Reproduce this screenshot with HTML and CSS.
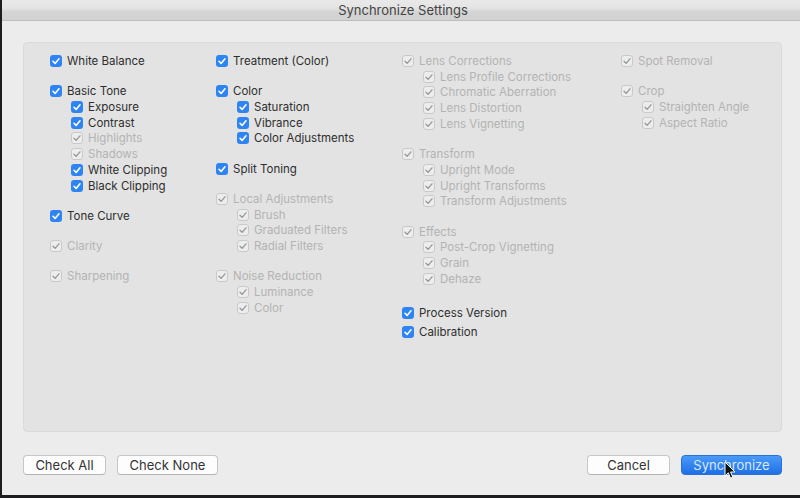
FILE: index.html
```html
<!DOCTYPE html>
<html>
<head>
<meta charset="utf-8">
<link rel="stylesheet" href="styles.css">
</head>
<body>
<div class="window">
  <div class="titlebar">Synchronize Settings</div>
  <div class="content">
    <div class="panel">
      <div class="col">
        <div class="group">
          <div class="item on"><span class="cb"><svg viewBox="0 0 12 12"><path d="M3 6.3 L5.1 8.4 L9 3.8"/></svg></span>White Balance</div>
        </div>
        <div class="group">
          <div class="item on"><span class="cb"><svg viewBox="0 0 12 12"><path d="M3 6.3 L5.1 8.4 L9 3.8"/></svg></span>Basic Tone</div>
          <div class="item sub on"><span class="cb"><svg viewBox="0 0 12 12"><path d="M3 6.3 L5.1 8.4 L9 3.8"/></svg></span>Exposure</div>
          <div class="item sub on"><span class="cb"><svg viewBox="0 0 12 12"><path d="M3 6.3 L5.1 8.4 L9 3.8"/></svg></span>Contrast</div>
          <div class="item sub off"><span class="cb"><svg viewBox="0 0 12 12"><path d="M3 6.3 L5.1 8.4 L9 3.8"/></svg></span>Highlights</div>
          <div class="item sub off"><span class="cb"><svg viewBox="0 0 12 12"><path d="M3 6.3 L5.1 8.4 L9 3.8"/></svg></span>Shadows</div>
          <div class="item sub on"><span class="cb"><svg viewBox="0 0 12 12"><path d="M3 6.3 L5.1 8.4 L9 3.8"/></svg></span>White Clipping</div>
          <div class="item sub on"><span class="cb"><svg viewBox="0 0 12 12"><path d="M3 6.3 L5.1 8.4 L9 3.8"/></svg></span>Black Clipping</div>
        </div>
        <div class="group">
          <div class="item on"><span class="cb"><svg viewBox="0 0 12 12"><path d="M3 6.3 L5.1 8.4 L9 3.8"/></svg></span>Tone Curve</div>
        </div>
        <div class="group">
          <div class="item off"><span class="cb"><svg viewBox="0 0 12 12"><path d="M3 6.3 L5.1 8.4 L9 3.8"/></svg></span>Clarity</div>
        </div>
        <div class="group">
          <div class="item off"><span class="cb"><svg viewBox="0 0 12 12"><path d="M3 6.3 L5.1 8.4 L9 3.8"/></svg></span>Sharpening</div>
        </div>
      </div>

      <div class="col">
        <div class="group">
          <div class="item on"><span class="cb"><svg viewBox="0 0 12 12"><path d="M3 6.3 L5.1 8.4 L9 3.8"/></svg></span>Treatment (Color)</div>
        </div>
        <div class="group">
          <div class="item on"><span class="cb"><svg viewBox="0 0 12 12"><path d="M3 6.3 L5.1 8.4 L9 3.8"/></svg></span>Color</div>
          <div class="item sub on"><span class="cb"><svg viewBox="0 0 12 12"><path d="M3 6.3 L5.1 8.4 L9 3.8"/></svg></span>Saturation</div>
          <div class="item sub on"><span class="cb"><svg viewBox="0 0 12 12"><path d="M3 6.3 L5.1 8.4 L9 3.8"/></svg></span>Vibrance</div>
          <div class="item sub on"><span class="cb"><svg viewBox="0 0 12 12"><path d="M3 6.3 L5.1 8.4 L9 3.8"/></svg></span>Color Adjustments</div>
        </div>
        <div class="group">
          <div class="item on"><span class="cb"><svg viewBox="0 0 12 12"><path d="M3 6.3 L5.1 8.4 L9 3.8"/></svg></span>Split Toning</div>
        </div>
        <div class="group">
          <div class="item off"><span class="cb"><svg viewBox="0 0 12 12"><path d="M3 6.3 L5.1 8.4 L9 3.8"/></svg></span>Local Adjustments</div>
          <div class="item sub off"><span class="cb"><svg viewBox="0 0 12 12"><path d="M3 6.3 L5.1 8.4 L9 3.8"/></svg></span>Brush</div>
          <div class="item sub off"><span class="cb"><svg viewBox="0 0 12 12"><path d="M3 6.3 L5.1 8.4 L9 3.8"/></svg></span>Graduated Filters</div>
          <div class="item sub off"><span class="cb"><svg viewBox="0 0 12 12"><path d="M3 6.3 L5.1 8.4 L9 3.8"/></svg></span>Radial Filters</div>
        </div>
        <div class="group">
          <div class="item off"><span class="cb"><svg viewBox="0 0 12 12"><path d="M3 6.3 L5.1 8.4 L9 3.8"/></svg></span>Noise Reduction</div>
          <div class="item sub off"><span class="cb"><svg viewBox="0 0 12 12"><path d="M3 6.3 L5.1 8.4 L9 3.8"/></svg></span>Luminance</div>
          <div class="item sub off"><span class="cb"><svg viewBox="0 0 12 12"><path d="M3 6.3 L5.1 8.4 L9 3.8"/></svg></span>Color</div>
        </div>
      </div>

      <div class="col">
        <div class="group">
          <div class="item off"><span class="cb"><svg viewBox="0 0 12 12"><path d="M3 6.3 L5.1 8.4 L9 3.8"/></svg></span>Lens Corrections</div>
          <div class="item sub off"><span class="cb"><svg viewBox="0 0 12 12"><path d="M3 6.3 L5.1 8.4 L9 3.8"/></svg></span>Lens Profile Corrections</div>
          <div class="item sub off"><span class="cb"><svg viewBox="0 0 12 12"><path d="M3 6.3 L5.1 8.4 L9 3.8"/></svg></span>Chromatic Aberration</div>
          <div class="item sub off"><span class="cb"><svg viewBox="0 0 12 12"><path d="M3 6.3 L5.1 8.4 L9 3.8"/></svg></span>Lens Distortion</div>
          <div class="item sub off"><span class="cb"><svg viewBox="0 0 12 12"><path d="M3 6.3 L5.1 8.4 L9 3.8"/></svg></span>Lens Vignetting</div>
        </div>
        <div class="group">
          <div class="item off"><span class="cb"><svg viewBox="0 0 12 12"><path d="M3 6.3 L5.1 8.4 L9 3.8"/></svg></span>Transform</div>
          <div class="item sub off"><span class="cb"><svg viewBox="0 0 12 12"><path d="M3 6.3 L5.1 8.4 L9 3.8"/></svg></span>Upright Mode</div>
          <div class="item sub off"><span class="cb"><svg viewBox="0 0 12 12"><path d="M3 6.3 L5.1 8.4 L9 3.8"/></svg></span>Upright Transforms</div>
          <div class="item sub off"><span class="cb"><svg viewBox="0 0 12 12"><path d="M3 6.3 L5.1 8.4 L9 3.8"/></svg></span>Transform Adjustments</div>
        </div>
        <div class="group">
          <div class="item off"><span class="cb"><svg viewBox="0 0 12 12"><path d="M3 6.3 L5.1 8.4 L9 3.8"/></svg></span>Effects</div>
          <div class="item sub off"><span class="cb"><svg viewBox="0 0 12 12"><path d="M3 6.3 L5.1 8.4 L9 3.8"/></svg></span>Post-Crop Vignetting</div>
          <div class="item sub off"><span class="cb"><svg viewBox="0 0 12 12"><path d="M3 6.3 L5.1 8.4 L9 3.8"/></svg></span>Grain</div>
          <div class="item sub off"><span class="cb"><svg viewBox="0 0 12 12"><path d="M3 6.3 L5.1 8.4 L9 3.8"/></svg></span>Dehaze</div>
        </div>
        <div class="group extra">
          <div class="item on"><span class="cb"><svg viewBox="0 0 12 12"><path d="M3 6.3 L5.1 8.4 L9 3.8"/></svg></span>Process Version</div>
          <div class="item on loose"><span class="cb"><svg viewBox="0 0 12 12"><path d="M3 6.3 L5.1 8.4 L9 3.8"/></svg></span>Calibration</div>
        </div>
      </div>

      <div class="col">
        <div class="group">
          <div class="item off"><span class="cb"><svg viewBox="0 0 12 12"><path d="M3 6.3 L5.1 8.4 L9 3.8"/></svg></span>Spot Removal</div>
        </div>
        <div class="group">
          <div class="item off"><span class="cb"><svg viewBox="0 0 12 12"><path d="M3 6.3 L5.1 8.4 L9 3.8"/></svg></span>Crop</div>
          <div class="item sub off"><span class="cb"><svg viewBox="0 0 12 12"><path d="M3 6.3 L5.1 8.4 L9 3.8"/></svg></span>Straighten Angle</div>
          <div class="item sub off"><span class="cb"><svg viewBox="0 0 12 12"><path d="M3 6.3 L5.1 8.4 L9 3.8"/></svg></span>Aspect Ratio</div>
        </div>
      </div>
    </div>

    <div class="footer">
      <div class="btns">
        <button class="btn w-all">Check All</button>
        <button class="btn w-none">Check None</button>
      </div>
      <div class="btns">
        <button class="btn w-cancel">Cancel</button>
        <button class="btn primary w-sync">Synchronize
          <svg class="cursor" viewBox="0 0 12 19" width="12" height="19"><path d="M1 1 L1 15 L4.3 11.8 L6.6 17.2 L8.8 16.2 L6.6 11 L11 11 Z" fill="#111" stroke="#fff" stroke-width="1"/></svg>
        </button>
      </div>
    </div>
  </div>
</div>
</body>
</html>
```
FILE: styles.css
```css
* { box-sizing: border-box; }
html, body { margin: 0; padding: 0; }
body {
  background: #1d1d1f;
  width: 800px;
  height: 498px;
  overflow: hidden;
  font-family: "Inter", "Liberation Sans", sans-serif;
}
.window {
  margin-left: 2px;
  width: 798px;
  height: 495px;
  background: #ececec;
  display: flex;
  flex-direction: column;
}
.titlebar {
  height: 21px;
  flex: none;
  background: linear-gradient(#e9e9e9 0%, #e4e4e4 40%, #d4d4d4 60%, #d2d2d2 100%);
  border-bottom: 1px solid #bdbdbd;
  text-align: center;
  font-size: 13px;
  line-height: 20px;
  color: #444;
  padding-left: 4px;
}
.content {
  flex: 1;
  display: flex;
  flex-direction: column;
  padding: 21px 18px 0 21px;
}
.panel {
  height: 390px;
  background: #e3e3e3;
  border: 1px solid #dadada;
  border-radius: 4px;
  display: grid;
  grid-template-columns: 166px 186px 219px 1fr;
  padding: 10px 0 0 26px;
  align-items: start;
}
.group { display: flex; flex-direction: column; }
.group + .group { margin-top: 14.5px; }
.group.extra { margin-top: 18.25px; }
.item {
  height: 15.75px;
  display: flex;
  align-items: center;
  font-size: 11.5px;
  white-space: nowrap;
  color: #2e2e2e;
}
.item.loose { margin-top: 3.25px; }
.item.sub { padding-left: 21px; }
.item.off { color: #b3b3b3; }
.cb {
  width: 12px;
  height: 12px;
  border-radius: 3px;
  margin-right: 5px;
  flex: none;
  display: flex;
}
.cb svg { width: 12px; height: 12px; }
.cb path { fill: none; stroke-width: 1.6; stroke-linecap: round; stroke-linejoin: round; }
.on .cb { background: #2f84f3; }
.on .cb path { stroke: #fff; }
.off .cb { background: #ededed; border: 1px solid #c9c9c9; }
.off .cb svg { margin: -1px; }
.off .cb path { stroke: #979797; stroke-width: 1.3; }
.footer {
  display: flex;
  justify-content: space-between;
  margin-top: 23px;
}
.btns { display: flex; gap: 11px; }
.btn {
  height: 20px;
  font-family: "Inter", "Liberation Sans", sans-serif;
  font-size: 13px;
  color: #333;
  background: #fdfdfd;
  border: 1px solid #c6c6c6;
  border-bottom-color: #b4b4b4;
  border-radius: 4px;
  padding: 0;
  line-height: 18px;
  position: relative;
}
.w-all { width: 83px; }
.w-none { width: 101px; }
.w-cancel { width: 83px; }
.w-sync { width: 101px; }
.btn.primary {
  background: linear-gradient(#4a9af8, #1e6fe6);
  border-color: #2a71d8;
  color: #d9e8ff;
}
.cursor {
  position: absolute;
  left: 42px;
  top: 5px;
}
```
